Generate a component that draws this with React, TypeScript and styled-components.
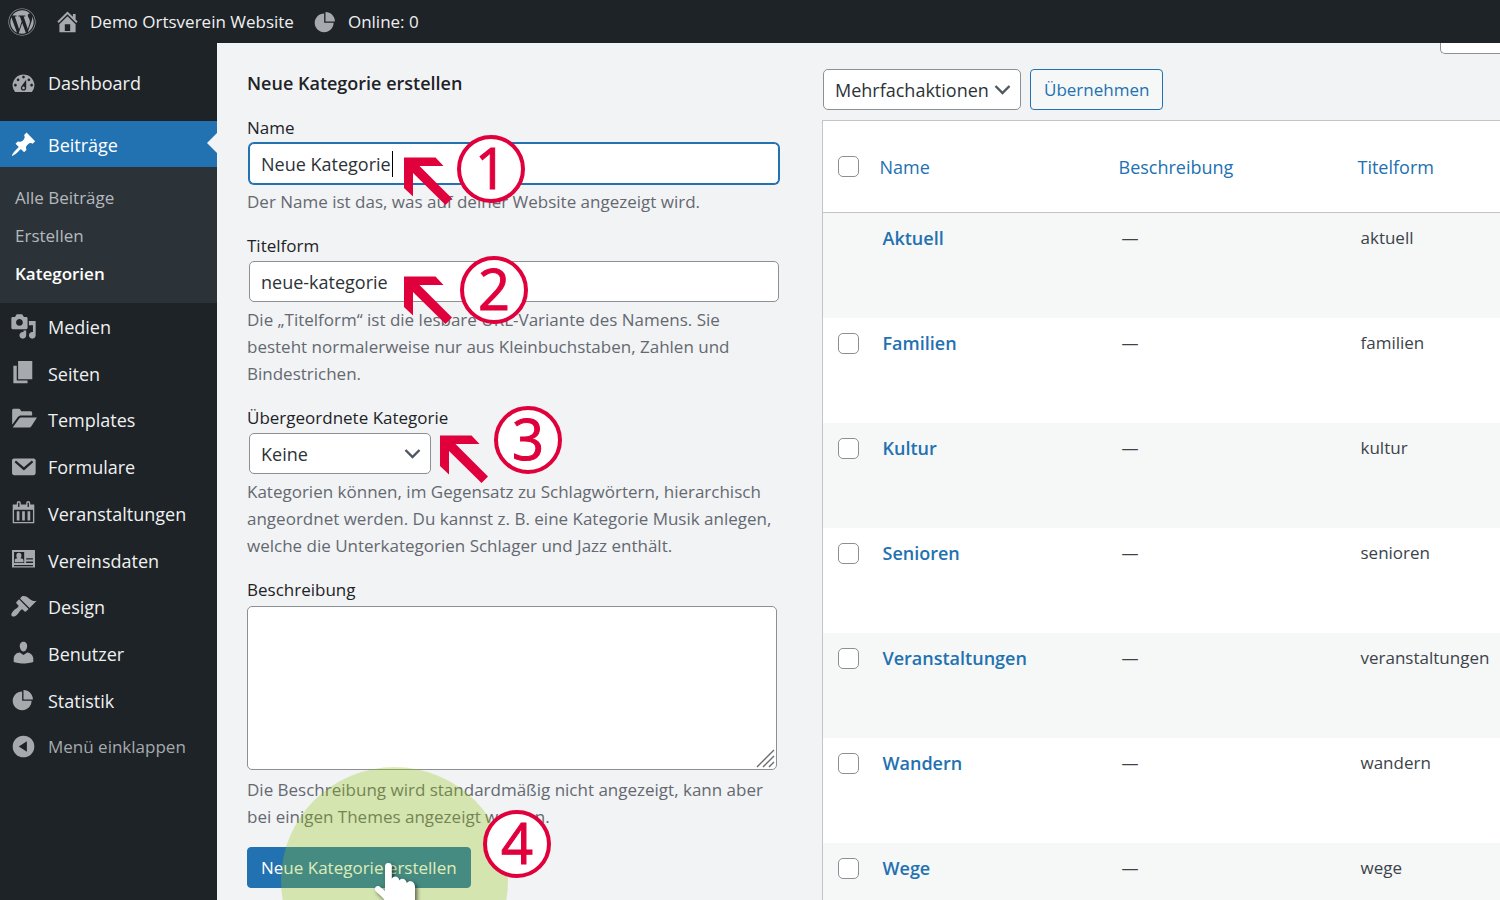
import React from "react";
import styled, { createGlobalStyle, css } from "styled-components";
import { FaWordpress } from "react-icons/fa";

const GlobalStyle = createGlobalStyle`
  *, *::before, *::after { box-sizing: border-box; }
  html, body { margin: 0; padding: 0; }
  body {
    background: #f2f3f5;
    color: #3c434a;
    font-family: "Segoe UI", "Open Sans", "Noto Sans", sans-serif;
    font-size: 17px;
    line-height: 26px;
  }
  button, input, select, textarea { font: inherit; margin: 0; }
  a { color: inherit; text-decoration: none; }
  ul { list-style: none; margin: 0; padding: 0; }
`;

const c = {
  dark: "#1d2327",
  sub: "#2c3338",
  blue: "#2271b1",
  page: "#f2f3f5",
  border: "#8c8f94",
  line: "#c3c4c7",
  muted: "#646970",
  red: "#e0003c",
};

const Shell = styled.div`
  height: 100vh;
  overflow: hidden;
  display: flex;
  flex-direction: column;
`;

const AdminBar = styled.header`
  flex: none;
  height: 43px;
  background: ${c.dark};
  color: #f0f0f1;
  display: flex;
  align-items: center;
  gap: 18px;
  padding: 0 8px;
`;

const BarLink = styled.a`
  display: flex;
  align-items: center;
  gap: 9px;
  color: #f0f0f1;
  svg { color: #a7aaad; }
`;

const Body = styled.div`
  flex: 1;
  min-height: 0;
  display: flex;
`;

const Sidebar = styled.nav`
  flex: none;
  width: 217px;
  background: ${c.dark};
  padding-top: 17px;
  font-size: 18px;
`;

const MenuGroup = styled.ul`
  display: grid;
  height: 468px;
  padding-top: 1px;
  grid-auto-rows: 1fr;
`;

const MenuLink = styled.a<{ $active?: boolean; $quiet?: boolean }>`
  position: relative;
  display: flex;
  align-items: center;
  gap: 11px;
  min-height: 46px;
  padding-left: 10px;
  color: ${(p) => (p.$quiet ? "#a7aaad" : "#f0f0f1")};
  font-size: ${(p) => (p.$quiet ? 17 : 18)}px;
  svg {
    margin-bottom: 2px;
    color: ${(p) => (p.$active ? "#fff" : "#a7aaad")};
  }
  ${(p) =>
    p.$active &&
    css`
      margin-top: 15px;
      padding-top: 2px;
      background: ${c.blue};
      color: #fff;
      &::after {
        content: "";
        position: absolute;
        right: 0;
        top: 12px;
        border: solid transparent;
        border-width: 10px 10px 10px 0;
        border-right-color: ${c.page};
      }
    `}
`;

const SubMenu = styled.ul`
  background: ${c.sub};
  padding: 12px 15px 10px;
  font-size: 17px;
`;

const SubLink = styled.a<{ $current?: boolean }>`
  display: block;
  line-height: 38px;
  color: ${(p) => (p.$current ? "#fff" : "#b4b9be")};
  font-weight: ${(p) => (p.$current ? 600 : 400)};
`;

const Content = styled.main`
  position: relative;
  flex: 1;
  min-width: 0;
  display: grid;
  grid-template-columns: minmax(0, 532fr) minmax(0, 678fr);
  column-gap: 43px;
  padding: 26px 0 0 30px;
`;

const ScreenTab = styled.div`
  position: absolute;
  top: 0;
  right: 0;
  width: 60px;
  height: 11px;
  background: #fff;
  border: 1px solid ${c.border};
  border-width: 0 0 1px 1px;
  border-radius: 0 0 0 5px;
`;

const Form = styled.form`
  min-width: 0;
`;

const FormTitle = styled.h2`
  margin: 0 0 18px;
  font-size: 18px;
  line-height: 28px;
  font-weight: 600;
  color: ${c.dark};
`;

const Field = styled.div`
  position: relative;
  margin-bottom: 18px;
`;

const Label = styled.label`
  display: block;
  color: ${c.dark};
`;

const control = css`
  display: block;
  background-color: #fff;
  border: 1px solid ${c.border};
  border-radius: 5px;
  color: #2c3338;
  font-size: 18px;
  outline: none;
`;

const TextInput = styled.input<{ $focused?: boolean }>`
  ${control}
  width: calc(100% - 2px);
  height: 41px;
  margin: 2px 0 4px 2px;
  padding: 0 11px;
  ${(p) =>
    p.$focused &&
    css`
      border-color: ${c.blue};
      box-shadow: 0 0 0 1px ${c.blue};
    `}
`;

const TextAreaWrap = styled.div`
  position: relative;
  width: calc(100% - 2px);
  margin: 3px 0 6px;
  svg {
    position: absolute;
    right: 2px;
    bottom: 2px;
    pointer-events: none;
  }
`;

const TextArea = styled.textarea`
  ${control}
  width: 100%;
  height: 164px;
  resize: vertical;
  &::-webkit-resizer { background: transparent; }
`;

const SelectWrap = styled.div`
  position: relative;
  width: max-content;
  svg {
    position: absolute;
    right: 10px;
    top: 12px;
    pointer-events: none;
  }
`;

const Select = styled.select<{ $width: number }>`
  ${control}
  appearance: none;
  width: ${(p) => p.$width}px;
  height: 41px;
  padding: 0 11px;
`;

const ParentSelect = styled(SelectWrap)`
  margin: 2px 0 4px 2px;
`;

const Help = styled.p`
  margin: 0;
  line-height: 27px;
  color: ${c.muted};
`;

const Caret = styled.span`
  position: absolute;
  left: 145px;
  top: 36px;
  width: 1px;
  height: 26px;
  background: #000;
`;

const Button = styled.button<{ $primary?: boolean }>`
  height: 41px;
  padding: 0 13px;
  border: 1px solid ${c.blue};
  border-radius: 4px;
  background: ${(p) => (p.$primary ? c.blue : "#f6f7f7")};
  color: ${(p) => (p.$primary ? "#fff" : c.blue)};
`;

const Submit = styled.div`
  position: relative;
  margin-top: -1px;
`;

const Arrow = styled.svg<{ $x: number; $y: number }>`
  position: absolute;
  left: ${(p) => p.$x}px;
  top: ${(p) => p.$y}px;
  fill: ${c.red};
`;

const Step = styled.span<{ $x: number; $y: number }>`
  position: absolute;
  left: ${(p) => p.$x}px;
  top: ${(p) => p.$y}px;
  z-index: 2;
  width: 68px;
  height: 68px;
  border: 4px solid ${c.red};
  border-radius: 50%;
  background: #fff;
  color: ${c.red};
  font-size: 56px;
  line-height: 56px;
  text-align: center;
  -webkit-text-stroke: 1px ${c.red};
`;

const Halo = styled.span`
  position: absolute;
  left: 34px;
  top: -80px;
  width: 227px;
  height: 227px;
  border-radius: 50%;
  background: rgba(149, 196, 24, 0.31);
  pointer-events: none;
`;

const Pointer = styled.svg`
  position: absolute;
  left: 126px;
  top: 14px;
  filter: drop-shadow(2px 2px 2px rgba(0, 0, 0, 0.6));
`;

const ListPane = styled.section`
  min-width: 0;
`;

const Actions = styled.div`
  display: flex;
  gap: 9px;
  margin: 0 0 10px 1px;
`;

const Table = styled.table`
  width: 100%;
  table-layout: fixed;
  border-collapse: collapse;
  border: 1px solid ${c.line};
  border-right: 0;
  background: #fff;
  th {
    height: 92px;
    padding: 0 0 0 9px;
    border-bottom: 1px solid ${c.line};
    color: ${c.blue};
    font-weight: 400;
    font-size: 18px;
    text-align: left;
    vertical-align: middle;
  }
  td {
    height: 105px;
    padding: 12px 0 0 12px;
    vertical-align: top;
    white-space: nowrap;
  }
  tbody tr:nth-child(odd) { background: #f6f7f7; }
  col:nth-child(1) { width: 48px; }
  col:nth-child(2), col:nth-child(3) { width: 239px; }
  th:first-child, td:first-child { padding-left: 15px; }
`;

const Check = styled.input`
  appearance: none;
  display: block;
  width: 21px;
  height: 21px;
  border: 1px solid ${c.border};
  border-radius: 5px;
  background: #fff;
  td & { margin-top: 3px; }
`;

const RowTitle = styled.a`
  color: ${c.blue};
  font-size: 18px;
  font-weight: 600;
`;

const icons = {
  home: "M16 8.5l1.53 1.53-1.06 1.06L10 4.6l-6.47 6.49-1.06-1.06L10 2.5l4 4v-2h2v4zm-6-2.46l6 5.99V18H4v-5.97zM12 17v-5H8v5h4z",
  pie: "M10 10V3c3.87 0 7 3.13 7 7h-7zM9 4v7h7c0 3.87-3.13 7-7 7s-7-3.13-7-7 3.13-7 7-7z",
  dashboard:
    "M3.76 17h12.48A7.998 7.998 0 0 0 10 4a7.998 7.998 0 0 0-6.24 13zM10 5c.55 0 1 .45 1 1s-.45 1-1 1-1-.45-1-1 .45-1 1-1zM6 7c.55 0 1 .45 1 1s-.45 1-1 1-1-.45-1-1 .45-1 1-1zm8 0c.55 0 1 .45 1 1s-.45 1-1 1-1-.45-1-1 .45-1 1-1zm-5.37 5.55L12 8v6c0 1.1-.9 2-2 2s-2-.9-2-2c0-.57.24-1.08.63-1.45zM4 11c.55 0 1 .45 1 1s-.45 1-1 1-1-.45-1-1 .45-1 1-1zm12 0c.55 0 1 .45 1 1s-.45 1-1 1-1-.45-1-1 .45-1 1-1zm-5 3c0-.55-.45-1-1-1s-1 .45-1 1 .45 1 1 1 1-.45 1-1z",
  pin: "M10.44 3.02l1.82-1.82 6.36 6.35-1.83 1.82c-1.05-.68-2.48-.57-3.41.36l-.75.75c-.92.93-1.04 2.35-.35 3.41l-1.83 1.82-2.41-2.41-2.8 2.79c-.42.42-3.38 2.71-3.8 2.29s1.86-3.39 2.28-3.81l2.79-2.79L4.1 9.36l1.83-1.82c1.05.69 2.48.57 3.4-.36l.75-.75c.93-.92 1.05-2.35.36-3.41z",
  media:
    "M13 11V4c0-.55-.45-1-1-1h-1.67L9 1H5L3.67 3H2c-.55 0-1 .45-1 1v7c0 .55.45 1 1 1h10c.55 0 1-.45 1-1zM7 4.5c1.38 0 2.5 1.12 2.5 2.5S8.38 9.5 7 9.5 4.5 8.38 4.5 7 5.62 4.5 7 4.5zM14 6h5v10.5c0 1.38-1.12 2.5-2.5 2.5S14 17.88 14 16.5s1.12-2.5 2.5-2.5c.17 0 .34.02.5.05V9h-3V6zm-4 8.05V13h2v3.5c0 1.38-1.12 2.5-2.5 2.5S7 17.88 7 16.5 8.12 14 9.5 14c.17 0 .34.02.5.05z",
  page: "M6 15V1.5h10.5V15H6zm-1 1h8v2H2.5V5H5v11z",
  folder:
    "M1.600 13.800V3.200c0-.7.5-1.200 1.200-1.200h3.600c.6 0 1 .3 1.300.8l.6 1.100h6.900c.7 0 1.200.5 1.200 1.200v1.900H8.200c-1 0-1.800.4-2.400 1.200zM2 16l4.700-6.600c.4-.6.9-.9 1.600-.9H20l-4.200 6.500c-.4.7-.9 1-1.700 1z",
  mail: "M3.1 4h14.3c.9 0 1.6.7 1.6 1.6v9.3c0 .9-.7 1.6-1.6 1.6H3.1c-.9 0-1.6-.7-1.6-1.6V5.600c0-.9.7-1.600 1.600-1.600zM3.400 6.800l6.900 6.200 6.900-6.200-1-1.200-5.900 4.900-5.900-4.900z",
  calendar:
    "M15 4h3v14H2V4h3V3c0-.83.67-1.5 1.5-1.5S8 2.17 8 3v1h4V3c0-.83.67-1.5 1.5-1.5S15 2.17 15 3v1zM6 3v2.5c0 .28.22.5.5.5s.5-.22.5-.5V3c0-.28-.22-.5-.5-.5S6 2.720 6 3zm7 0v2.5c0 .28.22.5.5.5s.5-.22.5-.5V3c0-.28-.22-.5-.5-.5s-.5.22-.5.5zm4 14V8H3v9h14zM7 16V9H5v7h2zm4 0V9H9v7h2zm4 0V9h-2v7h2z",
  card: "M1.500 3H18.500V16H1.500zM3 4.500V12.500H10.500V4.500zM12 9V10H17V9zM12 11.500V12.500H17V11.500zM3 14V15H17V14zM3.500 12V10.500c0-1 .8-1.500 2-1.500-.6-.5-.8-1.200-.8-2 0-1.200.7-2 1.900-2s1.900.8 1.900 2c0 .8-.2 1.500-.8 2 1.400 0 2.300.5 2.300 1.500V12z",
  brush:
    "M14.48 11.06L7.41 3.99l1.5-1.5c.5-.56 2.3-.47 3.51.32 1.21.8 1.43 1.28 2.91 2.1 1.18.64 2.45 1.26 4.45.85zm-.71.71L6.7 4.7 4.93 6.47c-.39.39-.39 1.02 0 1.41l1.06 1.06c.39.39.39 1.03 0 1.42-.6.6-1.43 1.11-2.21 1.69-.35.26-.7.53-1.01.84C1.43 14.23.4 16.08 1.4 17.07c.99 1 2.84-.03 4.18-1.36.31-.31.58-.66.85-1.02.57-.78 1.08-1.61 1.69-2.21.39-.39 1.02-.39 1.41 0l1.06 1.06c.39.39 1.02.39 1.41 0z",
  user: "M10 9.25c-2.27 0-2.73-3.44-2.73-3.44C7 4.02 7.82 2 9.97 2c2.16 0 2.98 2.02 2.71 3.81 0 0-.41 3.44-2.68 3.44zm0 2.57L12.72 10c2.39 0 4.52 2.33 4.52 4.53v2.49s-3.65 1.13-7.24 1.13c-3.65 0-7.24-1.13-7.24-1.13v-2.49c0-2.25 1.94-4.48 4.47-4.48z",
  collapse:
    "M10 2a8 8 0 1 0 0 16 8 8 0 0 0 0-16zM12.500 6.200v7.600L6.500 10z",
};

type IconName = keyof typeof icons;

const Icon = ({ name }: { name: IconName }) => (
  <svg width="27" height="27" viewBox="0 0 20 20" fill="currentColor" fillRule="evenodd" aria-hidden="true">
    <path d={icons[name]} />
  </svg>
);

const Chevron = () => (
  <svg width="17" height="17" viewBox="0 0 17 17" fill="none" stroke="#50575e" strokeWidth="2.4" aria-hidden="true">
    <path d="M1.500 5l7 7 7-7" />
  </svg>
);

const Grip = () => (
  <svg width="19" height="19" viewBox="0 0 19 19" stroke="#6a6d70" strokeWidth="1.400" aria-hidden="true">
    <path d="M0 0H19V19H0z" fill="#fff" stroke="none" />
    <path d="M1 18L18 1M7 18L18 7M13 18l5-5" />
  </svg>
);

const Pointing = ({ x, y }: { x: number; y: number }) => (
  <Arrow $x={x} $y={y} width="49" height="49" viewBox="0 0 49 49" aria-hidden="true">
    <path d="M0 .5H31.500L39.500 9H15.500L48 41.500 41.500 48 9 16V39.500L0 31z" />
  </Arrow>
);

const menu: { icon: IconName; label: string; quiet?: boolean }[] = [
  { icon: "media", label: "Medien" },
  { icon: "page", label: "Seiten" },
  { icon: "folder", label: "Templates" },
  { icon: "mail", label: "Formulare" },
  { icon: "calendar", label: "Veranstaltungen" },
  { icon: "card", label: "Vereinsdaten" },
  { icon: "brush", label: "Design" },
  { icon: "user", label: "Benutzer" },
  { icon: "pie", label: "Statistik" },
  { icon: "collapse", label: "Menü einklappen", quiet: true },
];

const categories = ["Aktuell", "Familien", "Kultur", "Senioren", "Veranstaltungen", "Wandern", "Wege"];

export default function App() {
  return (
    <Shell>
      <GlobalStyle />
      <AdminBar>
        <BarLink href="#" aria-label="WordPress">
          <FaWordpress size={28} />
        </BarLink>
        <BarLink href="#">
          <Icon name="home" />
          Demo Ortsverein Website
        </BarLink>
        <BarLink href="#">
          <Icon name="pie" />
          Online: 0
        </BarLink>
      </AdminBar>
      <Body>
        <Sidebar>
          <MenuLink href="#">
            <Icon name="dashboard" />
            Dashboard
          </MenuLink>
          <MenuLink href="#" $active>
            <Icon name="pin" />
            Beiträge
          </MenuLink>
          <SubMenu>
            <li><SubLink href="#">Alle Beiträge</SubLink></li>
            <li><SubLink href="#">Erstellen</SubLink></li>
            <li><SubLink href="#" $current>Kategorien</SubLink></li>
          </SubMenu>
          <MenuGroup>
            {menu.map((m) => (
              <li key={m.label}>
                <MenuLink href="#" $quiet={m.quiet}>
                  <Icon name={m.icon} />
                  {m.label}
                </MenuLink>
              </li>
            ))}
          </MenuGroup>
        </Sidebar>
        <Content>
          <ScreenTab />
          <Form onSubmit={(e) => e.preventDefault()}>
            <FormTitle>Neue Kategorie erstellen</FormTitle>
            <Field>
              <Label htmlFor="name">Name</Label>
              <TextInput id="name" $focused defaultValue="Neue Kategorie" />
              <Caret />
              <Help>Der Name ist das, was auf deiner Website angezeigt wird.</Help>
              <Pointing x={157} y={42} />
              <Step $x={210} $y={20}>1</Step>
            </Field>
            <Field>
              <Label htmlFor="slug">Titelform</Label>
              <TextInput id="slug" defaultValue="neue-kategorie" />
              <Help>
                Die „Titelform“ ist die lesbare URL-Variante des Namens. Sie besteht normalerweise nur aus
                Kleinbuchstaben, Zahlen und Bindestrichen.
              </Help>
              <Pointing x={157} y={43} />
              <Step $x={213} $y={23}>2</Step>
            </Field>
            <Field>
              <Label htmlFor="parent">Übergeordnete Kategorie</Label>
              <ParentSelect>
                <Select id="parent" $width={182}>
                  <option>Keine</option>
                </Select>
                <Chevron />
              </ParentSelect>
              <Help>
                Kategorien können, im Gegensatz zu Schlagwörtern, hierarchisch angeordnet werden. Du kannst z. B.
                eine Kategorie Musik anlegen, welche die Unterkategorien Schlager und Jazz enthält.
              </Help>
              <Pointing x={193} y={30} />
              <Step $x={247} $y={1}>3</Step>
            </Field>
            <Field>
              <Label htmlFor="description">Beschreibung</Label>
              <TextAreaWrap>
                <TextArea id="description" />
                <Grip />
              </TextAreaWrap>
              <Help>
                Die Beschreibung wird standardmäßig nicht angezeigt, kann aber bei einigen Themes angezeigt werden.
              </Help>
            </Field>
            <Submit>
              <Button type="submit" $primary>Neue Kategorie erstellen</Button>
              <Halo />
              <Step $x={236} $y={-37}>4</Step>
              <Pointer width="48" height="56" viewBox="0 0 48 56" fill="#fff" aria-hidden="true">
                <path d="M12 30V5.300a3.400 3.400 0 0 1 6.800 0V18C19.500 14.500 26 14.500 26.300 19.500 27.500 16.500 33 17 33.800 22 36 18.800 42 20 42 26V38c0 6-3 9-4 13H18c-1-7-5-9-8-14L2.600 30c-2-3 1-6 4-4.500z" />
              </Pointer>
            </Submit>
          </Form>
          <ListPane>
            <Actions>
              <SelectWrap>
                <Select $width={198} aria-label="Mehrfachaktion wählen">
                  <option>Mehrfachaktionen</option>
                </Select>
                <Chevron />
              </SelectWrap>
              <Button type="button">Übernehmen</Button>
            </Actions>
            <Table>
              <colgroup>
                <col />
                <col />
                <col />
                <col />
              </colgroup>
              <thead>
                <tr>
                  <th><Check type="checkbox" aria-label="Alle auswählen" /></th>
                  <th><a href="#">Name</a></th>
                  <th><a href="#">Beschreibung</a></th>
                  <th><a href="#">Titelform</a></th>
                </tr>
              </thead>
              <tbody>
                {categories.map((name, i) => (
                  <tr key={name}>
                    <td>{i > 0 && <Check type="checkbox" aria-label={`${name} auswählen`} />}</td>
                    <td><RowTitle href="#">{name}</RowTitle></td>
                    <td>—</td>
                    <td>{name.toLowerCase()}</td>
                  </tr>
                ))}
              </tbody>
            </Table>
          </ListPane>
        </Content>
      </Body>
    </Shell>
  );
}
